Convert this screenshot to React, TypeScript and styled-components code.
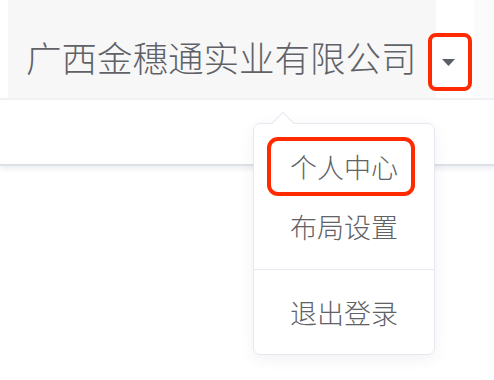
import React from "react";
import styled, { createGlobalStyle } from "styled-components";

const Global = createGlobalStyle`
  html, body { margin: 0; padding: 0; background: #ffffff; }
  body {
    width: 494px;
    height: 380px;
    overflow: hidden;
    font-family: "Noto Sans CJK SC", "Noto Sans", sans-serif;
    font-weight: 300;
    color: #606266;
  }
`;

const Page = styled.div`
  position: relative;
  width: 494px;
  height: 380px;
`;

const HeaderRow = styled.div`
  display: flex;
  align-items: flex-start;
  height: 98px;
`;

const TitlePanel = styled.div`
  margin-left: 8px;
  width: 428px;
  height: 98px;
  box-sizing: border-box;
  padding: 16px 0 0 18px;
  background: #f7f7f8;
  display: flex;
  align-items: center;
  font-size: 35.5px;
  line-height: 1;
  color: #5f6267;
  white-space: nowrap;
`;

const CaretBox = styled.div`
  margin: 33px 0 0 -8px;
  width: 44px;
  height: 58px;
  box-sizing: border-box;
  border: 4px solid #ff2a00;
  border-radius: 8px;
  background: #ffffff;
  display: flex;
  align-items: center;
  justify-content: center;
  padding-right: 3px;
`;

const RightFill = styled.div`
  flex: 1;
  height: 98px;
  margin-left: 2px;
  background: #fbfbfb;
`;

const SubBar = styled.div`
  height: 64px;
  background: #ffffff;
  border-top: 2px solid #f1f1f3;
  border-bottom: 2px solid #dfe1e9;
  box-shadow: 0 3px 5px rgba(200, 203, 215, 0.35);
`;

const Popup = styled.div`
  position: absolute;
  left: 253px;
  top: 123px;
  width: 182px;
  height: 232px;
  box-sizing: border-box;
  border: 1.5px solid #e6e8f0;
  border-radius: 7px;
  background: #ffffff;
  box-shadow: 0 4px 16px rgba(0, 0, 0, 0.06);
  padding: 15px 0 12px;
`;

const Arrow = styled.div`
  position: absolute;
  left: 21px;
  top: -9px;
  width: 15px;
  height: 15px;
  background: #ffffff;
  border-top: 1.5px solid #e6e8f0;
  border-left: 1.5px solid #e6e8f0;
  transform: rotate(45deg);
`;

const Menu = styled.ul`
  list-style: none;
  margin: 0;
  padding: 0;
`;

const Item = styled.li<{ $divided?: boolean }>`
  height: 58px;
  display: flex;
  align-items: center;
  padding: 0 36px;
  font-size: 27px;
  line-height: 1;
  color: #606266;
  white-space: nowrap;
  ${(p) =>
    p.$divided
      ? `
    margin-top: 14px;
    border-top: 1.5px solid #e8eaf1;
    padding-top: 13px;
    box-sizing: content-box;
  `
      : ""}
`;

const Highlight = styled.span`
  display: flex;
  align-items: center;
  height: 59px;
  box-sizing: border-box;
  margin: -3px 0 0 -23px;
  padding: 0 13px 0 19px;
  border: 4px solid #ff2a00;
  border-radius: 11px;
`;

const Caret = () => (
  <svg width="13" height="7" viewBox="0 0 13 7">
    <path d="M0 0 L13 0 L6.5 7 Z" fill="#5a5e66" />
  </svg>
);

export default function App() {
  return (
    <Page>
      <Global />
      <HeaderRow>
        <TitlePanel>广西金穗通实业有限公司</TitlePanel>
        <CaretBox>
          <Caret />
        </CaretBox>
        <RightFill />
      </HeaderRow>
      <SubBar />
      <Popup>
        <Arrow />
        <Menu>
          <Item>
            <Highlight>个人中心</Highlight>
          </Item>
          <Item>布局设置</Item>
          <Item $divided>退出登录</Item>
        </Menu>
      </Popup>
    </Page>
  );
}
